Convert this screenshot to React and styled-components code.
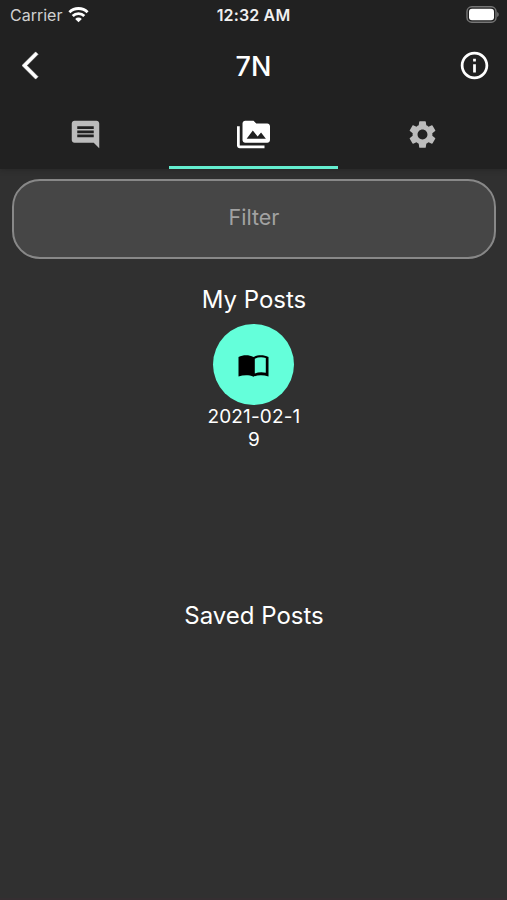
import React from "react";
import styled, { createGlobalStyle } from "styled-components";
import { MdComment, MdPermMedia, MdSettings, MdInfoOutline, MdArrowBackIos } from "react-icons/md";

const GlobalStyle = createGlobalStyle`
  * { box-sizing: border-box; }
  body {
    margin: 0;
    background: #303030;
    font-family: Inter, "Liberation Sans", sans-serif;
    color: #fff;
  }
`;

const Screen = styled.div`
  height: 900px;
  display: flex;
  flex-direction: column;
  background: #303030;
  border-bottom: 2px solid #352e31;
  overflow: hidden;
`;

const Header = styled.header`
  height: 169px;
  flex: none;
  background: #212121;
  box-shadow: 0 1px 6px rgba(0, 0, 0, 0.2);
`;

const StatusBar = styled.div`
  height: 30px;
  display: grid;
  grid-template-columns: 1fr auto 1fr;
  align-items: center;
  padding: 0 8px 0 10px;
  font-size: 16px;
  line-height: 29px;
`;

const Carrier = styled.div`
  display: flex;
  align-items: center;
  gap: 6px;
  color: #d0d0d0;
`;

const Clock = styled.div`
  font-weight: 600;
  font-size: 16px;
  color: #f0f0f0;
  letter-spacing: 0.15px;
  margin-right: 2px;
`;

const Battery = styled.svg`
  justify-self: end;
  margin-top: -2px;
`;

const TitleBar = styled.div`
  height: 72px;
  display: grid;
  grid-template-columns: 60px 1fr 60px;
  align-items: center;
`;

const IconButton = styled.button`
  display: flex;
  padding: 0;
  border: 0;
  background: none;
  color: #fff;
  justify-self: ${(p) => p.$side};
  margin-left: ${(p) => (p.$side === "start" ? "22px" : 0)};
  margin-right: ${(p) => (p.$side === "end" ? "16px" : 0)};
  margin-bottom: 1px;

  path { stroke-width: ${(p) => (p.$side === "start" ? "0.4px" : 0)}; stroke: currentColor; }
  path[fill="none"] { stroke: none; }
`;

const Title = styled.h1`
  margin: 0;
  text-align: center;
  font-size: 27px;
  font-weight: 500;
  letter-spacing: 0;
`;

const Tabs = styled.nav`
  height: 67px;
  display: grid;
  grid-template-columns: repeat(3, 1fr);
`;

const Tab = styled.button`
  display: flex;
  align-items: center;
  justify-content: center;
  padding: 0;
  border: 0;
  border-bottom: 3px solid ${(p) => (p.$active ? "#64eed0" : "transparent")};
  background: none;
  color: ${(p) => (p.$active ? "#fff" : "#bcbcbc")};

  &:first-child { padding-left: 1px; }
`;

const Content = styled.main`
  flex: 1;
  display: flex;
  flex-direction: column;
  align-items: center;
  padding: 10px 11px 0 12px;
`;

const Filter = styled.input`
  width: 100%;
  height: 80px;
  padding: 0 0 4px;
  border: 2px solid #888;
  border-radius: 28px;
  background: #464646;
  text-align: center;
  font: 400 21.5px Inter, "Liberation Sans", sans-serif;
  color: #fff;
  &::placeholder { color: #a2a2a2; opacity: 1; }
`;

const Section = styled.section`
  display: flex;
  flex-direction: column;
  align-items: center;
  height: ${(p) => p.$height};
  padding-top: ${(p) => p.$top};
`;

const SectionTitle = styled.h2`
  margin: 0;
  font-size: 24px;
  font-weight: 400;
  line-height: 30px;
`;

const Post = styled.div`
  width: 96px;
  margin-top: 9px;
  display: flex;
  flex-direction: column;
  align-items: center;
`;

const Avatar = styled.div`
  width: 81px;
  height: 81px;
  display: flex;
  align-items: center;
  justify-content: center;
  padding-top: 2px;
  border-radius: 50%;
  background: #64ffda;
`;

const PostDate = styled.div`
  width: 96px;
  font-size: 19px;
  font-weight: 400;
  line-height: 23px;
  letter-spacing: 0.15px;
  text-align: center;
`;

const WifiIcon = () => (
  <svg width="21" height="16" viewBox="0 0 21 16" fill="none" stroke="#fff">
    <path d="M1.4 5.2a13 13 0 0 1 18.2 0" strokeWidth="2.8" />
    <path d="M4.7 9a8.1 8.1 0 0 1 11.600 0" strokeWidth="2.8" />
    <path d="M10.500 15.200L7.200 11.900a4.700 4.700 0 0 1 6.600 0z" fill="#fff" stroke="none" />
  </svg>
);

const BatteryIcon = () => (
  <Battery width="33" height="17" viewBox="0 0 33 17">
    <rect x="1" y="0.8" width="29" height="15.400" rx="4.800" fill="none" stroke="#777" strokeWidth="1.400" />
    <rect x="3" y="2.700" width="25" height="11.600" rx="3" fill="#fff" />
    <path d="M31.200 6v5c2-.8 2-4.200 0-5z" fill="#777" />
  </Battery>
);

const BookIcon = () => (
  <svg width="31" height="24" viewBox="0 0 31 24">
    <path d="M.5 3C5 .7 11 .7 15.500 2.900 20 .7 26 .7 30.500 3v19.600c-5-1.800-10.500-1.800-15 .1-4.500-1.900-10-1.900-15-.1z" fill="#000" />
    <path d="M16.800 4.700c3.500-1.600 7.500-1.700 11-.6v14.700c-3.600-.8-7.600-.7-11 .7z" fill="#64ffda" />
  </svg>
);

export default function App() {
  return (
    <Screen>
      <GlobalStyle />
      <Header>
        <StatusBar>
          <Carrier>Carrier <WifiIcon /></Carrier>
          <Clock>12:32 AM</Clock>
          <BatteryIcon />
        </StatusBar>
        <TitleBar>
          <IconButton $side="start" aria-label="Back"><MdArrowBackIos size={33} /></IconButton>
          <Title>7N</Title>
          <IconButton $side="end" aria-label="Info"><MdInfoOutline size={33} /></IconButton>
        </TitleBar>
        <Tabs>
          <Tab aria-label="Comments"><MdComment size={33} /></Tab>
          <Tab aria-label="Media" $active><MdPermMedia size={33} /></Tab>
          <Tab aria-label="Settings"><MdSettings size={33} /></Tab>
        </Tabs>
      </Header>
      <Content>
        <Filter placeholder="Filter" aria-label="Filter" />
        <Section $height="316px" $top="26px">
          <SectionTitle>My Posts</SectionTitle>
          <Post>
            <Avatar><BookIcon /></Avatar>
            <PostDate>2021-02-1<br />9</PostDate>
          </Post>
        </Section>
        <Section $height="auto" $top="26px">
          <SectionTitle>Saved Posts</SectionTitle>
        </Section>
      </Content>
    </Screen>
  );
}
